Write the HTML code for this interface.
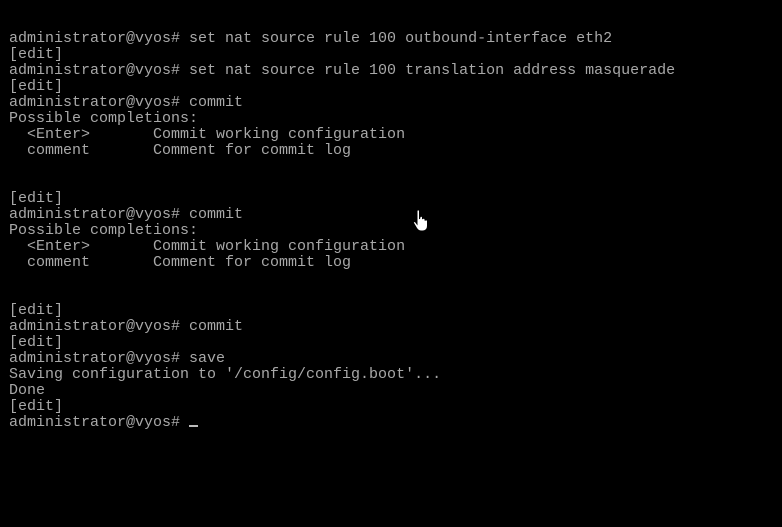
<!DOCTYPE html>
<html><head><meta charset="utf-8"><style>
html,body{margin:0;padding:0;background:#000;width:782px;height:527px;overflow:hidden}
pre{position:absolute;left:9px;top:31px;margin:0;font-family:"Liberation Mono",monospace;font-size:15px;line-height:16px;color:#a8a8a8;letter-spacing:0}
.cur{position:absolute;left:189px;top:425px;width:9px;height:2px;background:#bbb}
svg{position:absolute;left:412px;top:209px}
</style></head><body>
<pre>administrator@vyos# set nat source rule 100 outbound-interface eth2
[edit]
administrator@vyos# set nat source rule 100 translation address masquerade
[edit]
administrator@vyos# commit
Possible completions:
  &lt;Enter&gt;       Commit working configuration
  comment       Comment for commit log


[edit]
administrator@vyos# commit
Possible completions:
  &lt;Enter&gt;       Commit working configuration
  comment       Comment for commit log


[edit]
administrator@vyos# commit
[edit]
administrator@vyos# save
Saving configuration to '/config/config.boot'...
Done
[edit]
administrator@vyos# </pre>
<div class="cur"></div>
<svg width="18" height="24" viewBox="0 0 18 24"><path d="M5 2 C5 0.5 7.5 0.5 7.5 2 L7.5 10 L8 8 C8.5 6.8 10.5 7 10.5 8.5 L10.5 10 C11 8.8 13 9 13 10.5 L13 11.5 C13.5 10.5 15.5 10.7 15.5 12 L15.5 17 C15.5 20 13.5 22 11 22 L9 22 C6.5 22 5.5 20.5 4.5 19 L1.5 14 C1 13 2.5 12 3.5 13 L5 15 Z" fill="#fff" stroke="#000" stroke-width="1"/></svg>
</body></html>
